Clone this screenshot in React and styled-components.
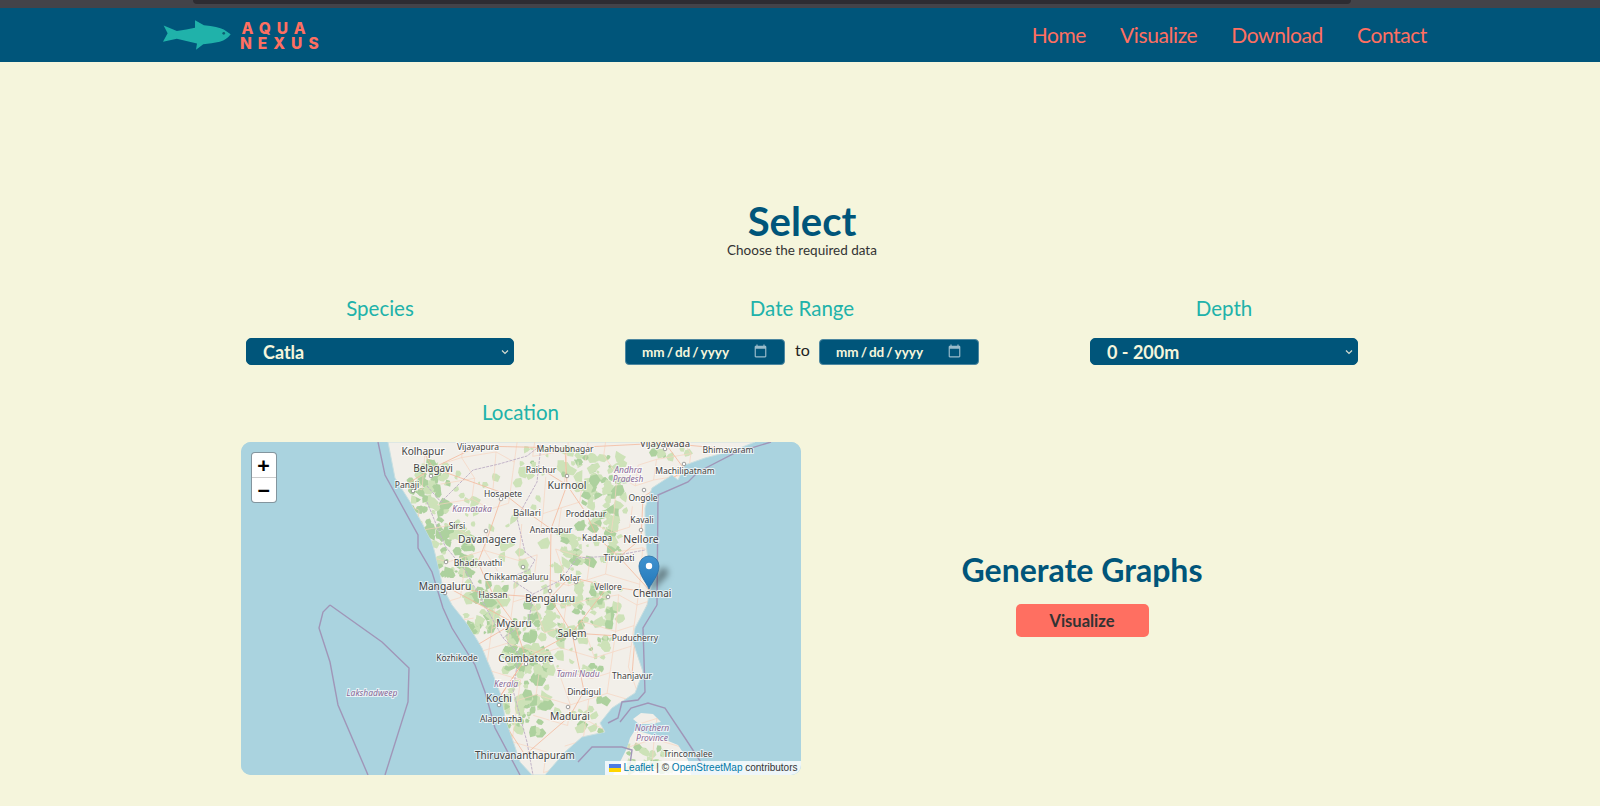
import styled, { createGlobalStyle } from 'styled-components';

const navy = '#00557a';
const coral = '#ff6f61';
const teal = '#20b2aa';
const uiFont = `Lato, "Open Sans", sans-serif`;

const chevron = `url("data:image/svg+xml,%3Csvg xmlns='http://www.w3.org/2000/svg' width='8' height='6' viewBox='0 0 8 6'%3E%3Cpath d='M1 1.5L4 4.5L7 1.5' fill='none' stroke='%23d5dcd0' stroke-width='1.2'/%3E%3C/svg%3E")`;

const GlobalStyle = createGlobalStyle`
html, body {
  margin: 0;
  padding: 0;
  background-color: #f5f5dc;
  font-family: ${uiFont};
}
`

const Page = styled.div`
min-height: 806px;
display: flex;
flex-direction: column;
overflow: hidden;
`

const TopStrip = styled.div`
height: 8px;
background-color: #434349;
display: flex;
justify-content: flex-start;
padding-left: 193px;
`

const TopStripBar = styled.div`
width: 1158px;
height: 4px;
background-color: #2d2c32;
border-radius: 0 0 4px 4px;
`

const Navbar = styled.nav`
height: 54px;
background-color: ${navy};
display: flex;
align-items: center;
justify-content: space-between;
padding: 0 173px 0 162px;
`

const Brand = styled.div`
display: flex;
align-items: center;
gap: 8px;
`

const BrandText = styled.div`
color: ${coral};
font-family: Inter, sans-serif;
font-weight: 800;
font-size: 15.5px;
line-height: 15px;
letter-spacing: 6px;
text-align: left;
text-indent: 1.5px;
padding-top: 1px;
`

const NavLinks = styled.div`
display: flex;
gap: 34px;
`

const NavLink = styled.a`
color: ${coral};
font-size: 21px;
letter-spacing: -0.4px;
line-height: 28px;
`

const Main = styled.main`
display: flex;
flex-direction: column;
align-items: center;
padding: 137px 0 0 4px;
`

const Title = styled.h1`
margin: 0;
color: ${navy};
font-size: 40px;
line-height: 44px;
font-weight: 700;
`

const Subtitle = styled.p`
margin: 0;
color: #333;
font-size: 13.5px;
line-height: 15px;
`

const FilterRow = styled.div`
width: 1266px;
margin-top: 38px;
display: grid;
grid-template-columns: repeat(3, 1fr);
`

const FilterGroup = styled.div`
display: flex;
flex-direction: column;
align-items: center;
gap: 18px;
`

const SectionLabel = styled.h3`
margin: 0;
color: ${teal};
font-size: 20.5px;
line-height: 24px;
font-weight: 400;
text-align: center;
`

const Dropdown = styled.select`
appearance: none;
width: 268px;
height: 27px;
padding: 0 0 0 16px;
border: 1px solid ${navy};
border-radius: 5px;
background-color: ${navy};
background-image: ${chevron};
background-repeat: no-repeat;
background-position: right 4px center;
color: #f5f5dc;
font-family: ${uiFont};
font-size: 18px;
font-weight: 700;
`

const DateRow = styled.div`
display: flex;
align-items: center;
gap: 10px;
height: 27px;
`

const DateInput = styled.input`
box-sizing: border-box;
width: 160px;
height: 26px;
padding: 0 16px 0 15px;
border: 1px solid #4d87a0;
border-radius: 4px;
background-color: ${navy};
color: #f5f5dc;
font-family: ${uiFont};
font-size: 13.5px;
font-weight: 700;
color-scheme: dark;

&::-webkit-datetime-edit-text {
  padding: 0 1px;
}

&::-webkit-calendar-picker-indicator {
  width: 15px;
  height: 15px;
  padding: 0;
  margin: 0;
  opacity: 0.6;
}
`

const ToText = styled.span`
color: #222;
font-size: 16px;
width: 14px;
text-align: center;
padding-bottom: 4px;
`

const LowerRow = styled.div`
width: 1123px;
margin-top: 35px;
display: grid;
grid-template-columns: 560px 1fr;
`

const MapColumn = styled.div`
display: flex;
flex-direction: column;
gap: 18px;
`

const MapFrame = styled.div`
position: relative;
width: 560px;
height: 333px;
border-radius: 10px;
overflow: hidden;
background-color: #aad3df;
`

const MapDrawing = styled.svg`
display: block;
`

const MapLabel = styled.text`
font-family: "Noto Sans", sans-serif;
font-size: ${p => p.$size}px;
font-style: ${p => (p.$region ? 'italic' : 'normal')};
fill: ${p => (p.$region ? '#8a6a99' : '#444')};
stroke: rgba(255, 255, 255, 0.7);
stroke-width: 2px;
paint-order: stroke;
text-anchor: middle;
dominant-baseline: central;
`

const ZoomBar = styled.div`
position: absolute;
top: 11px;
left: 11px;
width: 24px;
border-radius: 3px;
box-shadow: 0 0 0 1px #83959e;
background-color: #fff;
display: flex;
flex-direction: column;
`

const ZoomButton = styled.a`
height: 24px;
text-align: center;
color: #000;
font: bold 20px/24px "DejaVu Sans Mono", monospace;
border-bottom: ${p => (p.$last ? 'none' : '1px solid #ccc')};
`

const PinDrawing = styled.svg`
position: absolute;
left: 397px;
top: 113px;
overflow: visible;
`

const Attribution = styled.div`
position: absolute;
right: 0;
bottom: 0;
height: 14px;
padding: 0 3px 0 4px;
display: flex;
align-items: center;
gap: 3px;
background-color: rgba(255, 255, 255, 0.8);
color: #333;
font-family: "Liberation Sans", sans-serif;
font-size: 10px;
line-height: 14px;
white-space: pre;
`

const AttributionLink = styled.a`
color: #0078a8;
`

const ActionColumn = styled.div`
display: flex;
flex-direction: column;
align-items: center;
justify-content: center;
padding-top: 14px;
`

const ActionTitle = styled.h2`
margin: 0;
color: ${navy};
font-size: 32px;
line-height: 36px;
font-weight: 700;
`

const VisualizeButton = styled.button`
width: 133px;
height: 33px;
margin-top: 16px;
border: none;
border-radius: 5px;
background-color: ${coral};
color: #333;
font-family: ${uiFont};
font-size: 16.5px;
font-weight: 700;
`

const land = 'M147 0L154 36L171 63L181 81L191 100L197 123L202 146L211 163L227 183L241 206L251 230L261 256L264 276L271 296L279 320L291 333L304 333L324 310L341 295L364 290L359 281L371 266L394 251L402 230L392 200L394 186L406 163L411 140L406 110L404 90L404 66L411 46L431 33L437 38L444 23L464 16L494 8L514 0Z';

const lanka = 'M389 296L394 288L408 292L420 296L437 303L447 318L450 333L372 333L380 318L386 306Z M392 277L400 271L412 272L420 280L408 282L398 282Z';

// where the forest sits on the tiles: cx, cy, rx, ry, number of patches, share of dark green
const forestClusters = [
  [186, 62, 20, 42, 80, 0.6], [215, 110, 18, 24, 60, 0.6], [245, 165, 22, 26, 60, 0.5], [285, 235, 22, 60, 130, 0.6],
  [306, 180, 24, 20, 40, 0.4], [360, 50, 24, 36, 90, 0.35], [350, 100, 30, 20, 36, 0.3], [355, 165, 26, 22, 44, 0.35],
  [330, 215, 40, 22, 44, 0.2], [310, 20, 30, 14, 20, 0.2], [250, 60, 50, 30, 30, 0.1], [300, 120, 40, 30, 34, 0.2],
  [405, 318, 24, 14, 30, 0.3], [430, 10, 20, 8, 10, 0.2], [340, 275, 24, 18, 16, 0.2],
];

const borders = [
  'M186 44L200 60L232 28L258 22L286 14L300 3', 'M300 3L296 40L276 76L284 110L294 118L288 128L268 136L292 152L320 138L336 116L372 114L404 108',
  'M292 152L288 178L262 196L278 212L272 248L286 300L292 333', 'M186 60L204 104L224 128L262 196',
];

const highways = [
  'M182 9L192 26L166 42', 'M192 26L237 4L324 6L424 1L487 7', 'M192 26L262 51L286 70L310 87L309 156',
  'M262 51L246 97L237 120L243 134L252 152L273 181L285 216L258 256',
  'M300 27L326 43L345 71L356 95L378 115L411 151', 'M324 6L326 43L310 87', 'M424 1L444 28L402 55L401 77L400 97L378 115',
  'M204 144L252 152L309 156L329 135L367 144L411 151', 'M309 156L331 191L394 195', 'M367 144L331 191L285 216',
  'M331 191L343 249L329 274L284 313', 'M411 151L394 195L391 233', 'M216 215L273 181L204 144', 'M285 216L258 256L260 276L284 313',
];

const seaLines = [
  'M137 0L144 33L177 93L177 106L191 130L202 166L211 186L234 223L244 250L254 286L279 333',
  'M89 163L141 200L168 226L167 260L144 333', 'M89 163L82 170L78 186L89 220L97 263L127 333',
  'M416 163L417 53L447 40L457 30L494 11L530 0', 'M416 163L402 186L404 250L397 258L381 260L377 276L367 281',
  'M379 280L390 266L407 261L424 266L444 296L461 322', 'M337 320L351 305L381 305L391 308L389 322',
];

const labels = [
  ['Kolhapur', 182, 9, 10], ['Vijayapura', 237, 4, 8.5], ['Mahbubnagar', 324, 6, 8.5], ['Vijayawada', 424, 1, 9.5],
  ['Bhimavaram', 487, 7, 8.5], ['Belagavi', 192, 26, 10], ['Raichur', 300, 27, 8.5], ['Machilipatnam', 444, 28, 8.5],
  ['Panaji', 166, 42, 8.5], ['Kurnool', 326, 43, 10.4], ['Ongole', 402, 55, 8.5], ['Hosapete', 262, 51, 8.5],
  ['Ballari', 286, 70, 9.5], ['Proddatur', 345, 71, 8.5], ['Kavali', 401, 77, 8.5], ['Sirsi', 216, 83, 8.5],
  ['Anantapur', 310, 87, 8.5], ['Kadapa', 356, 95, 8.5], ['Nellore', 400, 97, 10.4], ['Davanagere', 246, 97, 10.2],
  ['Bhadravathi', 237, 120, 8.5], ['Tirupati', 378, 115, 8.5], ['Chikkamagaluru', 275, 134, 8.4], ['Kolar', 329, 135, 8.5],
  ['Vellore', 367, 144, 8.5], ['Mangaluru', 204, 144, 10.2], ['Hassan', 252, 152, 8.5], ['Bengaluru', 309, 156, 10.2],
  ['Chennai', 411, 151, 10], ['Mysuru', 273, 181, 10], ['Salem', 331, 191, 10.2], ['Puducherry', 394, 195, 8.5],
  ['Kozhikode', 216, 215, 8.5], ['Coimbatore', 285, 216, 10], ['Thanjavur', 391, 233, 8.5], ['Kochi', 258, 256, 10],
  ['Dindigul', 343, 249, 8.5], ['Alappuzha', 260, 276, 8.5], ['Madurai', 329, 274, 10.2], ['Trincomalee', 447, 311, 8.5],
  ['Thiruvananthapuram', 284, 313, 10],
];

const regions = [
  ['Andhra', 387, 27], ['Pradesh', 387, 36], ['Karnataka', 231, 66], ['Kerala', 265, 241], ['Tamil Nadu', 337, 231],
  ['Lakshadweep', 131, 250], ['Northern', 411, 285], ['Province', 411, 295],
];

const cityDots = [
  [190, 34], [260, 57], [245, 89], [172, 49], [204, 151], [309, 149], [326, 34], [400, 88], [334, 196], [327, 265], [258, 263],
  [285, 222], [403, 48], [443, 22], [424, 7], [205, 120], [282, 125], [335, 140], [342, 250], [367, 155],
];

// small seeded generator so the map tiles come out the same on every load
function makeRandom(seed) {
  let s = seed;
  return () => {
    s = (s * 16807) % 2147483647;
    return (s - 1) / 2147483646;
  };
}

function makeForest() {
  const rand = makeRandom(4711);
  const patches = [];
  forestClusters.forEach(([cx, cy, rx, ry, count, dark]) => {
    for (let n = 0; n < count; n++) {
      const x = cx + (rand() * 2 - 1) * rx;
      const y = cy + (rand() * 2 - 1) * ry;
      const size = 1.5 + rand() * 5;
      const corners = [];
      for (let c = 0; c < 6; c++) {
        const angle = (c / 6) * Math.PI * 2;
        const r = size * (0.5 + rand() * 0.8);
        corners.push(`${(x + Math.cos(angle) * r).toFixed(1)} ${(y + Math.sin(angle) * r).toFixed(1)}`);
      }
      patches.push({ d: `M${corners.join('L')}Z`, dark: rand() < dark });
    }
  });
  return patches;
}

function makeRoadMesh() {
  const rand = makeRandom(90210);
  const lines = [];
  const step = 24;
  const point = (col, row) => {
    const r = makeRandom((col + 40) * 7919 + (row + 40) * 104729);
    r();
    return [col * step + 130 + r() * 16 - 8, row * step - 8 + r() * 16 - 8];
  };
  for (let col = 0; col < 14; col++) {
    for (let row = 0; row < 16; row++) {
      const [x, y] = point(col, row);
      if (rand() < 0.62) {
        const [a, b] = point(col + 1, row);
        lines.push(`M${x.toFixed(1)} ${y.toFixed(1)}L${a.toFixed(1)} ${b.toFixed(1)}`);
      }
      if (rand() < 0.62) {
        const [a, b] = point(col, row + 1);
        lines.push(`M${x.toFixed(1)} ${y.toFixed(1)}L${a.toFixed(1)} ${b.toFixed(1)}`);
      }
    }
  }
  return lines;
}

const forest = makeForest();
const roadMesh = makeRoadMesh();

function FishLogo() {
  return (
    <svg width="70" height="32" viewBox="485 58 212 94" preserveAspectRatio="none">
      <path
        fill={teal}
        d="M490 77L530 93Q560 90 585 84L585 62L612 76Q655 80 672 89L693 103Q682 118 660 125Q635 131 610 132L588 148L591 130Q560 123 530 116L488 125L502 100Z"
      />
      <circle cx="672" cy="100" r="4" fill="#0d5f72" />
    </svg>
  );
}

function OsmMap() {
  return (
    <MapDrawing width="560" height="333" viewBox="0 0 560 333">
      <defs>
        <clipPath id="landClip"><path d={`${land} ${lanka}`} /></clipPath>
        <filter id="tileBlur"><feGaussianBlur stdDeviation="0.7" /></filter>
      </defs>
      <rect width="560" height="333" fill="#aad3df" />
      <path d={land} fill="#f2efe9" stroke="#c9dfe0" strokeWidth="1" />
      <path d={lanka} fill="#f2efe9" />
      <g clipPath="url(#landClip)">
        <g filter="url(#tileBlur)">
          {forest.map((p, i) => (
            <path key={i} d={p.d} fill={p.dark ? '#add19e' : '#cde2b8'} />
          ))}
        </g>
        {roadMesh.map((d, i) => (
          <path key={i} d={d} fill="none" stroke="#f7d4c0" strokeWidth="0.7" />
        ))}
        {borders.map((d, i) => (
          <path key={i} d={d} fill="none" stroke="#c2b4c8" strokeWidth="1" strokeDasharray="3 1" />
        ))}
        {highways.map((d, i) => (
          <path key={i} d={d} fill="none" stroke="#f4b99c" strokeWidth="0.8" />
        ))}
      </g>
      {seaLines.map((d, i) => (
        <path key={i} d={d} fill="none" stroke="#a096b8" strokeWidth="1.4" />
      ))}
      {cityDots.map(([x, y], i) => (
        <circle key={i} cx={x} cy={y} r="1.8" fill="#fff" stroke="#777" strokeWidth="0.7" />
      ))}
      {labels.map(([name, x, y, size]) => (
        <MapLabel key={name} x={x} y={y} $size={size}>{name}</MapLabel>
      ))}
      {regions.map(([name, x, y]) => (
        <MapLabel key={name} x={x} y={y} $size={8.5} $region>{name}</MapLabel>
      ))}
    </MapDrawing>
  );
}

function MapPin() {
  return (
    <PinDrawing width="30" height="38" viewBox="0 0 30 38">
      <defs>
        <linearGradient id="pinFill" x1="0" y1="0" x2="0" y2="1">
          <stop offset="0" stopColor="#3f93d0" />
          <stop offset="1" stopColor="#2477b8" />
        </linearGradient>
        <filter id="pinBlur" x="-50%" y="-50%" width="200%" height="200%"><feGaussianBlur stdDeviation="3" /></filter>
      </defs>
      <path d="M11 34L22 14Q31 10 30 20L16 34Z" fill="rgba(0,0,0,0.4)" filter="url(#pinBlur)" />
      <path
        d="M11 34C8 27 1 20 1 11A10 10 0 0 1 21 11C21 20 14 27 11 34Z"
        fill="url(#pinFill)"
        stroke="#2a6ea3"
        strokeWidth="0.8"
      />
      <circle cx="11" cy="11" r="3.2" fill="#fff" />
    </PinDrawing>
  );
}

function UkraineFlag() {
  return (
    <svg width="12" height="8" viewBox="0 0 12 8">
      <rect width="12" height="4" fill="#4c7be1" />
      <rect y="4" width="12" height="4" fill="#ffd500" />
    </svg>
  );
}

function App() {
  return (
    <Page>
      <GlobalStyle />
      <TopStrip><TopStripBar /></TopStrip>
      <Navbar>
        <Brand>
          <FishLogo />
          <BrandText>AQUA<br />NEXUS</BrandText>
        </Brand>
        <NavLinks>
          <NavLink>Home</NavLink>
          <NavLink>Visualize</NavLink>
          <NavLink>Download</NavLink>
          <NavLink>Contact</NavLink>
        </NavLinks>
      </Navbar>
      <Main>
        <Title>Select</Title>
        <Subtitle>Choose the required data</Subtitle>
        <FilterRow>
          <FilterGroup>
            <SectionLabel>Species</SectionLabel>
            <Dropdown defaultValue="Catla">
              <option>Catla</option>
            </Dropdown>
          </FilterGroup>
          <FilterGroup>
            <SectionLabel>Date Range</SectionLabel>
            <DateRow>
              <DateInput type="date" />
              <ToText>to</ToText>
              <DateInput type="date" />
            </DateRow>
          </FilterGroup>
          <FilterGroup>
            <SectionLabel>Depth</SectionLabel>
            <Dropdown defaultValue="0 - 200m">
              <option>0 - 200m</option>
            </Dropdown>
          </FilterGroup>
        </FilterRow>
        <LowerRow>
          <MapColumn>
            <SectionLabel>Location</SectionLabel>
            <MapFrame>
              <OsmMap />
              <ZoomBar>
                <ZoomButton>+</ZoomButton>
                <ZoomButton $last>−</ZoomButton>
              </ZoomBar>
              <MapPin />
              <Attribution>
                <UkraineFlag />
                <span><AttributionLink>Leaflet</AttributionLink> | © <AttributionLink>OpenStreetMap</AttributionLink> contributors</span>
              </Attribution>
            </MapFrame>
          </MapColumn>
          <ActionColumn>
            <ActionTitle>Generate Graphs</ActionTitle>
            <VisualizeButton>Visualize</VisualizeButton>
          </ActionColumn>
        </LowerRow>
      </Main>
    </Page>
  );
}

export default App;
